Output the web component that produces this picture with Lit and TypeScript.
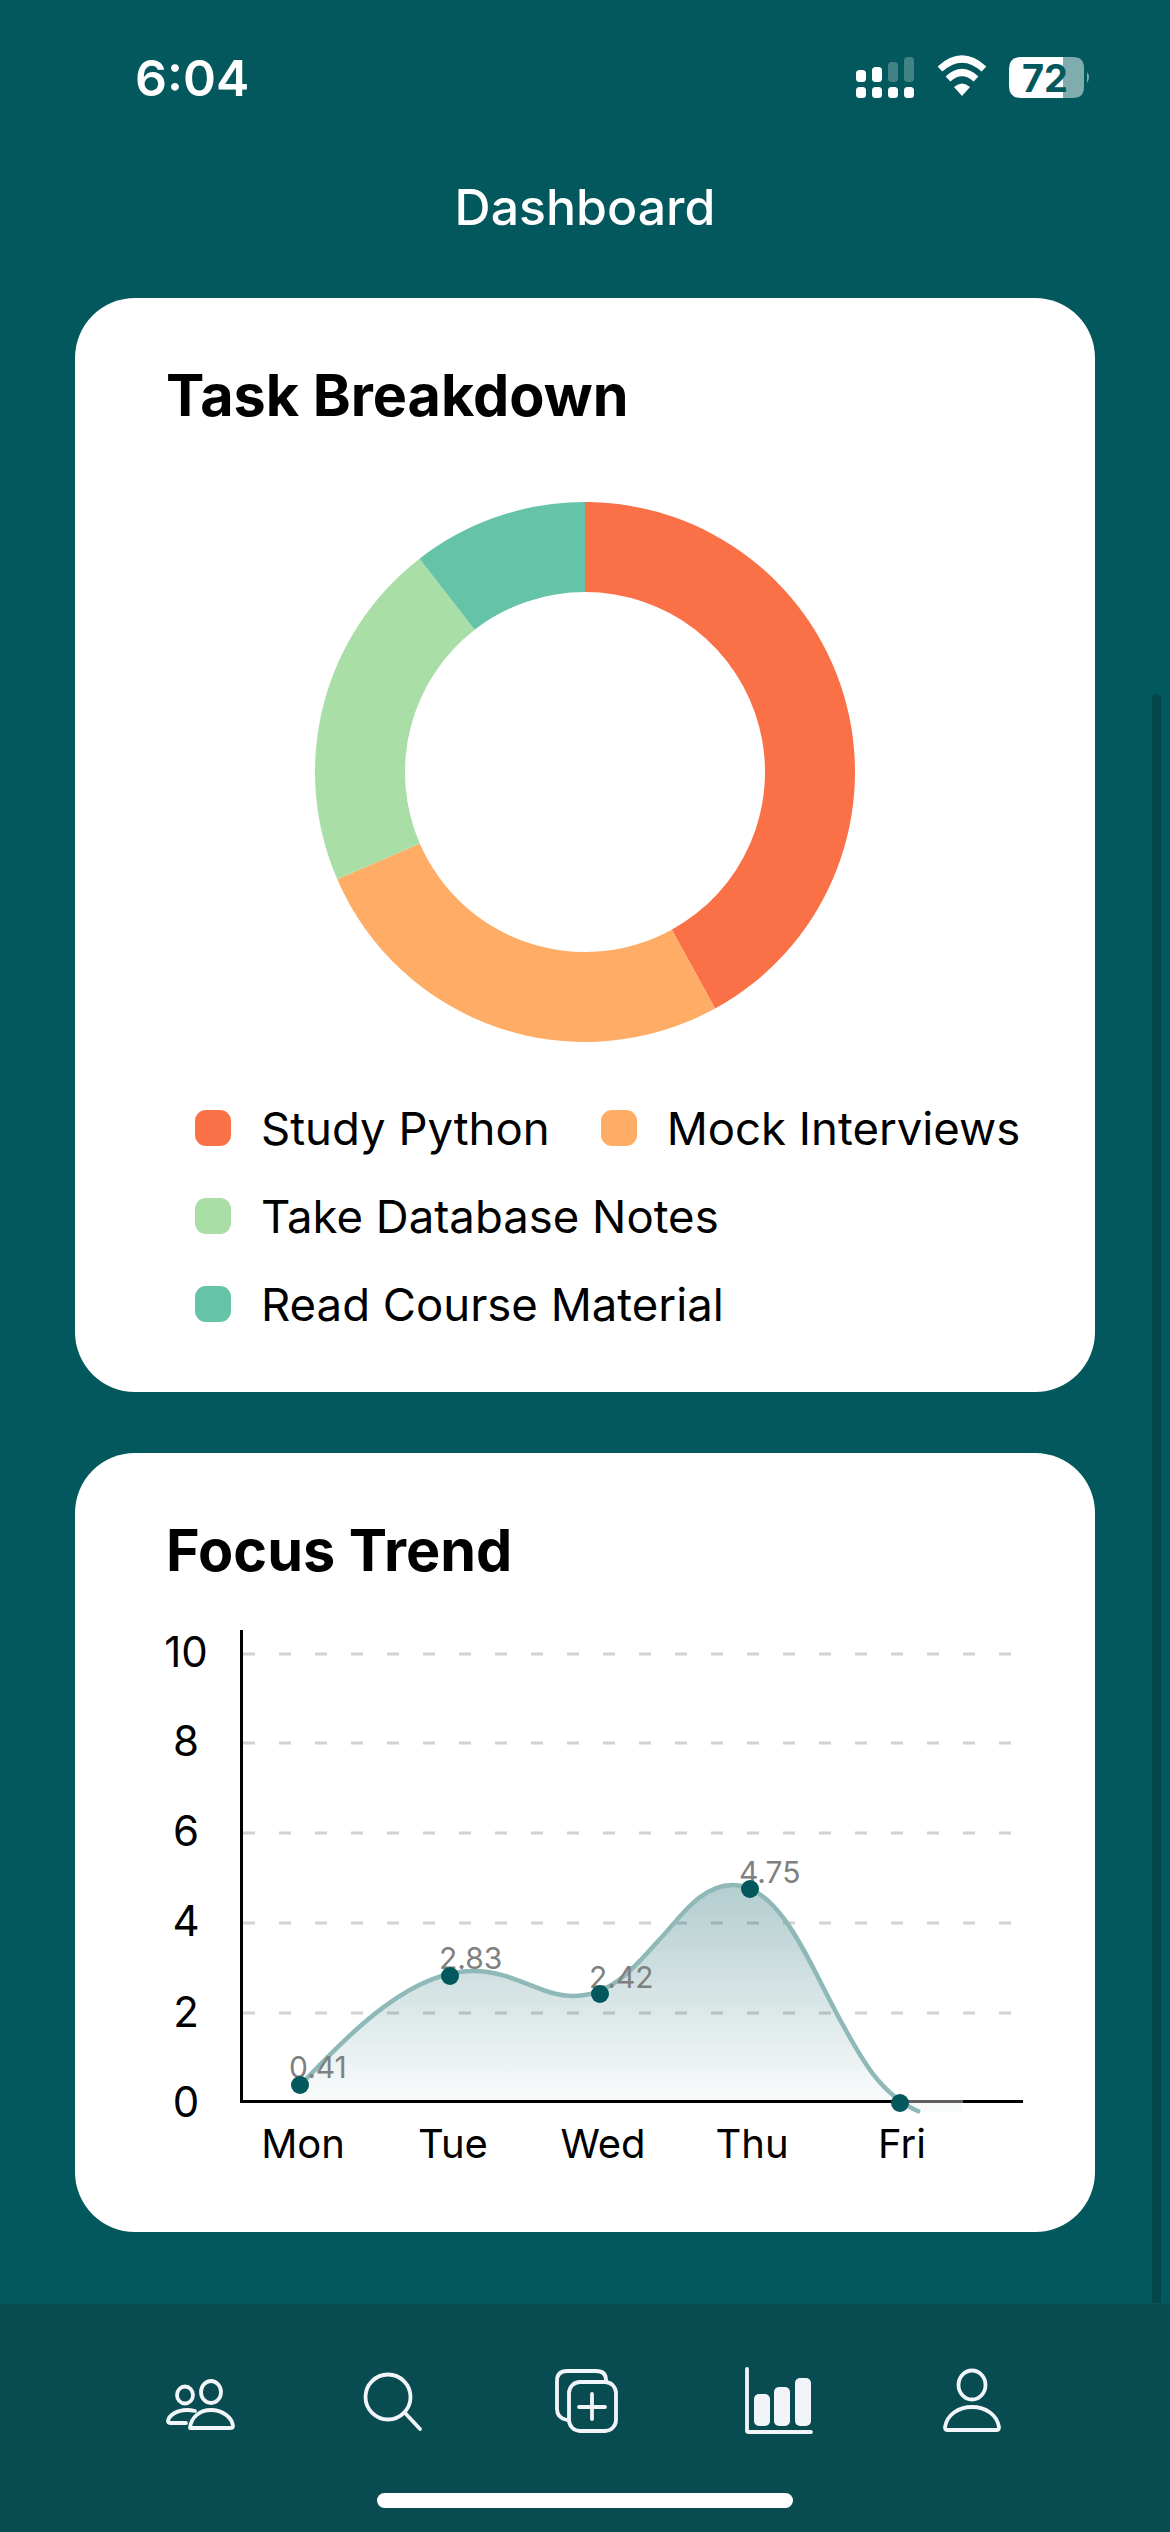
import { LitElement, html, css, svg } from 'lit';
import { customElement } from 'lit/decorators.js';

const SLICES = [
  { label: 'Study Python', color: '#fb7147', to: 0.42 },
  { label: 'Mock Interviews', color: '#ffad66', to: 0.685 },
  { label: 'Take Database Notes', color: '#a9dfa7', to: 0.895 },
  { label: 'Read Course Material', color: '#65c3a7', to: 1 },
];

const Y_TICKS = [
  { label: '10', y: 1654, base: 1667 },
  { label: '8', y: 1743, base: 1756 },
  { label: '6', y: 1833, base: 1846 },
  { label: '4', y: 1923, base: 1936 },
  { label: '2', y: 2013, base: 2027 },
  { label: '0', y: 0, base: 2117 },
];

const POINTS = [
  { day: 'Mon', value: '0.41', x: 300, y: 2085, labelBase: 2078, dayX: 303 },
  { day: 'Tue', value: '2.83', x: 450, y: 1976, labelBase: 1969, dayX: 453 },
  { day: 'Wed', value: '2.42', x: 600, y: 1994, labelBase: 1988, dayX: 603 },
  { day: 'Thu', value: '4.75', x: 750, y: 1889, labelBase: 1883, dayX: 752 },
  { day: 'Fri', value: '', x: 900, y: 2103, labelBase: 0, dayX: 902 },
];

const CURVE =
  'M300,2085 C340,2045 405,1971 473,1971 C515,1971 540,1996 573,1996 C615,1996 640,1960 660,1939 C680,1918 700,1885 733,1885 C780,1885 810,1965 837,2014 C860,2057 880,2095 920,2112';

function slicePath(from: number, to: number) {
  const R = 270;
  const r = 180;
  const pt = (f: number, rad: number) => {
    const a = f * 2 * Math.PI;
    return `${270 + rad * Math.sin(a)},${270 - rad * Math.cos(a)}`;
  };
  const large = to - from > 0.5 ? 1 : 0;
  return `M${pt(from, R)} A${R},${R} 0 ${large} 1 ${pt(to, R)} L${pt(to, r)} A${r},${r} 0 ${large} 0 ${pt(from, r)} Z`;
}

@customElement('app-root')
export class AppRoot extends LitElement {
  static styles = css`
    :host {
      display: flex;
      flex-direction: column;
      position: relative;
      width: 1170px;
      height: 2532px;
      overflow: hidden;
      background: #02585c;
      font-family: Inter, 'Liberation Sans', sans-serif;
      color: #000;
    }

    .status {
      display: flex;
      justify-content: space-between;
      align-items: flex-start;
      height: 172px;
      padding: 48px 70px 0 135px;
      box-sizing: border-box;
    }

    .time {
      font-size: 50px;
      line-height: 60px;
      font-weight: 600;
      color: #fff;
    }

    .status-icons {
      display: block;
      margin-top: 2px;
    }

    .title {
      height: 126px;
      text-align: center;
      font-size: 50px;
      line-height: 70px;
      font-weight: 500;
      color: #fff;
    }

    .cards {
      flex: 1;
      display: flex;
      flex-direction: column;
      gap: 61px;
      padding: 0 75px;
    }

    .card {
      box-sizing: border-box;
      background: #fff;
      border-radius: 60px;
      padding-top: 62px;
    }

    .card.tasks {
      height: 1094px;
    }

    .card.trend {
      height: 779px;
    }

    h2 {
      margin: 0;
      padding-left: 91px;
      font-size: 57.5px;
      line-height: 70px;
      font-weight: 700;
    }

    .donut {
      display: block;
      margin: 72px auto 42px;
    }

    .legend {
      display: flex;
      flex-wrap: wrap;
      column-gap: 51px;
      padding: 0 40px 0 120px;
    }

    .legend-item {
      display: flex;
      align-items: center;
      gap: 30px;
      height: 88px;
      font-size: 45.5px;
    }

    .swatch {
      width: 36px;
      height: 36px;
      border-radius: 11px;
    }

    .chart {
      display: block;
      margin-top: 35px;
    }

    .axis-num {
      font-size: 42px;
      fill: #000;
      text-anchor: middle;
    }

    .day {
      font-size: 40px;
      fill: #000;
      text-anchor: middle;
    }

    .point-val {
      font-size: 30px;
      fill: #808080;
    }

    .tabbar {
      height: 228px;
      box-sizing: border-box;
      background: #084b50;
      padding: 61px 103px 0;
    }

    .tabs {
      display: grid;
      grid-template-columns: repeat(5, 193px);
      justify-items: center;
    }

    .tabs svg {
      display: block;
    }

    .home {
      width: 416px;
      height: 15px;
      margin: 56px auto 0;
      border-radius: 8px;
      background: #fff;
    }

    .scrollbar {
      position: absolute;
      right: 9px;
      top: 694px;
      height: 1609px;
      width: 9px;
      border-radius: 5px 5px 0 0;
      background: #04474a;
    }

    .batt-num {
      font-size: 38px;
      font-weight: 700;
      fill: #02585c;
    }
  `;

  renderStatusIcons() {
    // coordinates are page pixels, offset by the viewBox
    return html`<svg class="status-icons" width="250" height="70" viewBox="850 50 250 70" fill="#fff">
      <rect x="856" y="70" width="10" height="12" rx="3.5" />
      <rect x="872" y="67" width="10" height="15" rx="3.5" />
      <rect x="888" y="62" width="10" height="20" rx="3.5" opacity=".25" />
      <rect x="904" y="57" width="10" height="25" rx="3.5" opacity=".25" />
      ${[856, 872, 888, 904].map((x) => svg`<rect x=${x} y="87" width="10" height="11" rx="3.5" />`)}
      <path d="M940,69 Q962,49 984,69" fill="none" stroke="#fff" stroke-width="7" />
      <path d="M948,79 Q962,66 976,79" fill="none" stroke="#fff" stroke-width="7" />
      <path d="M954,87 Q962,80 970,87 L962,96 Z" />
      <path d="M1063,57 H1073 Q1084,57 1084,68 V87 Q1084,98 1073,98 H1063 Z" opacity=".5" />
      <path d="M1087,72 Q1091,77 1087,83 Z" opacity=".5" />
      <path d="M1021,57 H1063 V98 H1021 Q1009,98 1009,86 V69 Q1009,57 1021,57 Z" />
      <text class="batt-num" x="1022" y="92">72</text>
    </svg>`;
  }

  renderChart() {
    return html`<svg class="chart" width="1020" height="580" viewBox="75 1620 1020 580">
      <defs>
        <linearGradient id="area" x1="0" y1="0" x2="0" y2="1">
          <stop offset="0" stop-color="#02585c" stop-opacity=".3" />
          <stop offset="1" stop-color="#02585c" stop-opacity=".01" />
        </linearGradient>
      </defs>
      ${Y_TICKS.filter((t) => t.y).map(
        (t) => svg`<line x1="243" x2="1011" y1=${t.y} y2=${t.y} stroke="#d2d2d2" stroke-width="3" stroke-dasharray="12 24" />`,
      )}
      ${Y_TICKS.map((t) => svg`<text class="axis-num" x="186" y=${t.base}>${t.label}</text>`)}
      <path d=${`${CURVE} L300,2112 Z`} fill="url(#area)" />
      <rect x="240" y="1630" width="3" height="473" fill="#000" />
      <rect x="240" y="2100" width="783" height="3" fill="#000" />
      <rect x="900" y="2100" width="63" height="3" fill="#fff" opacity=".38" />
      <rect x="300" y="2103" width="600" height="10" fill="#fff" />
      <rect x="900" y="2103" width="63" height="9" fill="#f9fbfb" />
      <path d=${CURVE} fill="none" stroke="#8fb8b8" stroke-width="4.5" />
      ${POINTS.map((p) => svg`<text class="point-val" x=${p.x - 11} y=${p.labelBase}>${p.value}</text>`)}
      ${POINTS.map((p) => svg`<circle cx=${p.x} cy=${p.y} r="9" fill="#02585c" />`)}
      ${POINTS.map((p) => svg`<text class="day" x=${p.dayX} y="2158">${p.day}</text>`)}
    </svg>`;
  }

  renderTabs() {
    const stroke = '#f1f5f9';
    return html`<div class="tabs">
      <svg width="72" height="72" viewBox="163 2363 72 72" fill="none" stroke=${stroke} stroke-width="3.8" stroke-linecap="round" stroke-linejoin="round">
        <ellipse cx="184" cy="2393" rx="8" ry="8.5" />
        <ellipse cx="210" cy="2390" rx="10" ry="11" />
        <path d="M194,2409 Q190,2408 186,2408 C176,2408 168,2413 167,2419 Q167,2421 170,2421 H185" />
        <path d="M189,2426 C190,2415 199,2408 210,2408 C221,2408 231,2415 232,2424 Q232,2426 229,2426 Z" />
      </svg>
      <svg width="72" height="72" viewBox="356 2366 72 72" fill="none" stroke=${stroke} stroke-width="3.8" stroke-linecap="round">
        <circle cx="387" cy="2398" r="22.5" />
        <path d="M405,2415 L419,2430" />
      </svg>
      <svg width="72" height="72" viewBox="549 2367 72 72" fill="none" stroke=${stroke} stroke-width="3.8" stroke-linecap="round">
        <path d="M605,2383 V2382 Q605,2373 595,2373 H566 Q556,2373 556,2383 V2411 Q556,2420 566,2422" />
        <rect x="568" y="2384" width="47" height="49" rx="11" />
        <path d="M578,2409 H604 M591,2396 V2421" />
      </svg>
      <svg width="72" height="72" viewBox="742 2367 72 72" fill=${stroke}>
        <path d="M746,2371 V2433 Q746,2434 748,2434 H810" fill="none" stroke=${stroke} stroke-width="3.8" stroke-linecap="round" />
        <rect x="753" y="2396" width="16" height="32" rx="5" />
        <rect x="773" y="2389" width="16" height="39" rx="5" />
        <rect x="794" y="2380" width="16" height="48" rx="5" />
      </svg>
      <svg width="72" height="72" viewBox="935 2367 72 72" fill="none" stroke=${stroke} stroke-width="3.8" stroke-linejoin="round">
        <ellipse cx="971" cy="2387" rx="13.5" ry="14.5" />
        <path d="M944,2429 C946,2417 957,2409 971,2409 C985,2409 996,2417 998,2429 Q998,2432 996,2432 H946 Q944,2432 944,2429 Z" />
      </svg>
    </div>`;
  }

  render() {
    let from = 0;
    return html`
      <div class="status">
        <span class="time">6:04</span>
        ${this.renderStatusIcons()}
      </div>
      <div class="title">Dashboard</div>
      <div class="cards">
        <section class="card tasks">
          <h2>Task Breakdown</h2>
          <svg class="donut" width="540" height="540" viewBox="0 0 540 540">
            ${SLICES.map((s) => {
              const d = slicePath(from, s.to - 0.00001);
              from = s.to;
              return svg`<path d=${d} fill=${s.color} />`;
            })}
          </svg>
          <div class="legend">
            ${SLICES.map(
              (s) => html`<div class="legend-item">
                <span class="swatch" style="background:${s.color}"></span>${s.label}
              </div>`,
            )}
          </div>
        </section>
        <section class="card trend">
          <h2>Focus Trend</h2>
          ${this.renderChart()}
        </section>
      </div>
      <div class="tabbar">
        ${this.renderTabs()}
        <div class="home"></div>
      </div>
      <div class="scrollbar"></div>
    `;
  }
}
